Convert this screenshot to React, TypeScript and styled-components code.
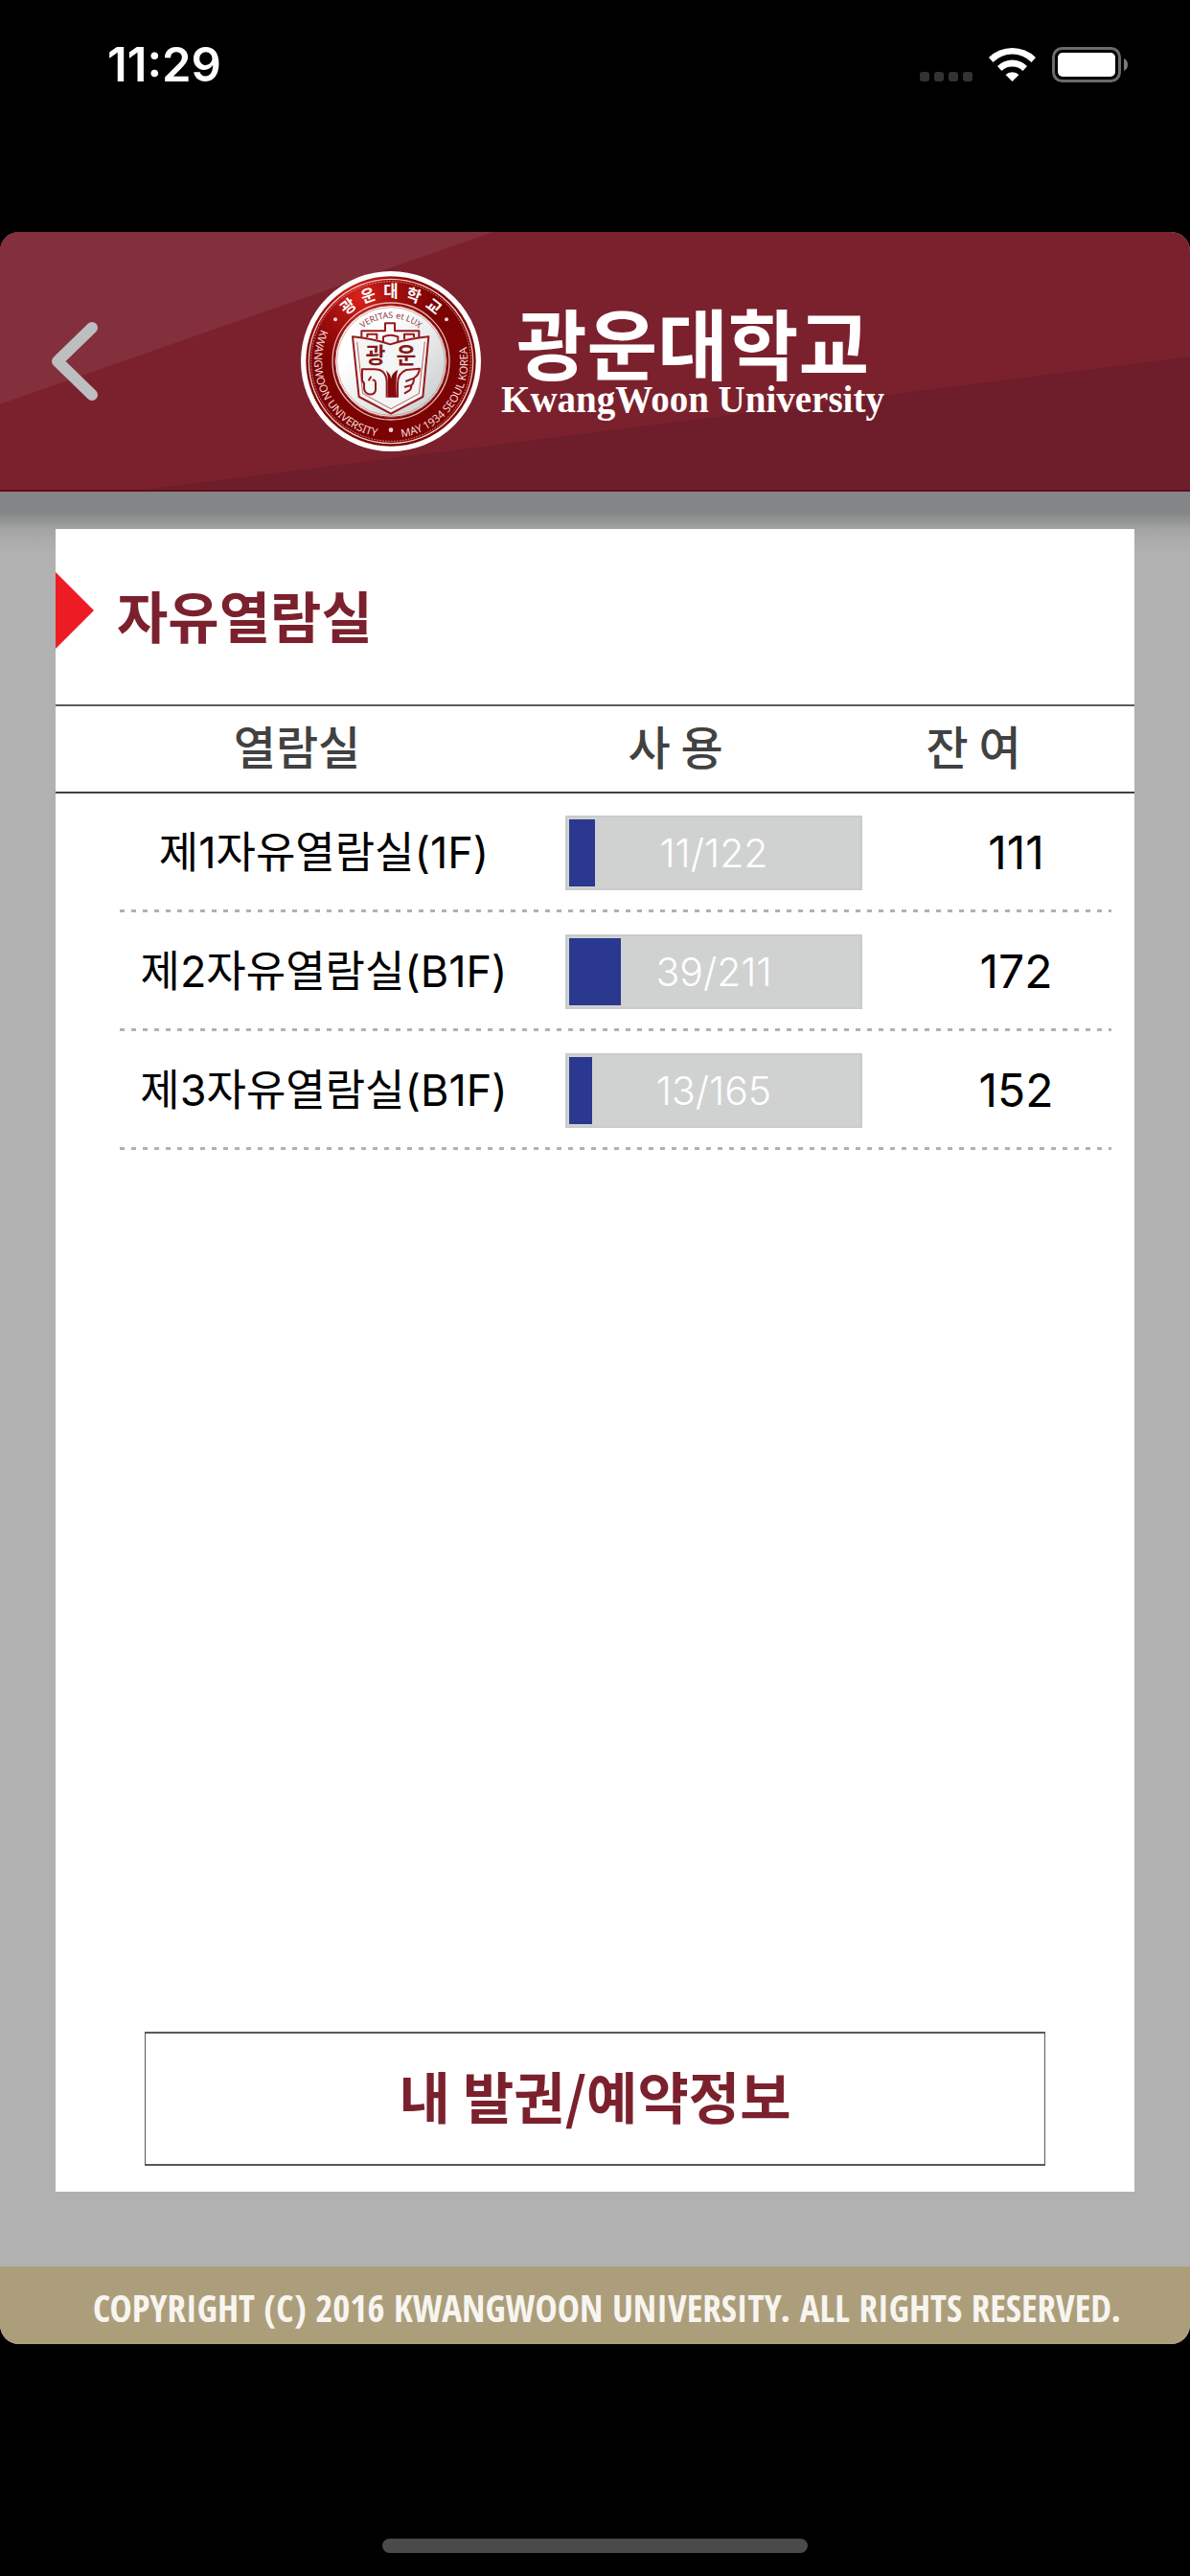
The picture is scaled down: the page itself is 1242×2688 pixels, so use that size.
import React from 'react';
import styled, { createGlobalStyle } from 'styled-components';

const sans = `Inter, "Noto Sans CJK KR", sans-serif`;
const korean = `"Noto Sans CJK KR", sans-serif`;
const maroon = '#7b212d';

const GlobalStyle = createGlobalStyle`
  *, *::before, *::after { box-sizing: border-box; }
  body { margin: 0; background: #000; font-family: ${sans}; }
`;

const Phone = styled.div`
  display: flex;
  flex-direction: column;
  min-height: 100vh;
  background: #000;
`;

const StatusBar = styled.div`
  display: flex;
  align-items: center;
  justify-content: space-between;
  height: 136px;
  margin-bottom: 106px;
  padding: 0 64px 0 112px;
  color: #fff;
`;

const Clock = styled.time`
  font-size: 49px;
  font-weight: 600;
  line-height: 56px;
`;

const Screen = styled.div`
  flex: 1;
  display: flex;
  flex-direction: column;
  overflow: hidden;
  border-radius: 20px;
  background: #b1b1b1;
`;

const Header = styled.header`
  position: relative;
  display: grid;
  grid-template-columns: 1fr auto 1fr;
  align-items: center;
  height: 271px;
  border-bottom: 2px solid #650d1b;
  background: ${maroon};
`;

const HeaderBackdrop = styled.svg`
  position: absolute;
  inset: 0;
  width: 100%;
  height: 100%;
`;

const BackButton = styled.button`
  position: relative;
  justify-self: start;
  display: flex;
  margin: 0;
  padding: 20px 40px;
  border: 0;
  background: none;
  cursor: pointer;
`;

const Brand = styled.div`
  position: relative;
  display: flex;
  align-items: center;
  gap: 20px;
  padding-right: 6px;
  color: #fff;
`;

const Wordmark = styled.div`
  display: flex;
  flex-direction: column;
  align-items: center;
`;

const BrandKorean = styled.span`
  font-family: ${korean};
  font-size: 80px;
  font-weight: 700;
  line-height: 80px;
`;

const BrandEnglish = styled.span`
  font-family: "Liberation Serif", serif;
  font-size: 39px;
  font-weight: 700;
  line-height: 44px;
`;

const Body = styled.main`
  flex: 1;
  display: flex;
  flex-direction: column;
  padding: 39px 58px 78px;
  background: linear-gradient(#848587 0, #848587 22px, #a4a6a5 40px, #b1b1b1 64px);
`;

const Card = styled.section`
  flex: 1;
  display: flex;
  flex-direction: column;
  background: #fff;
`;

const TitleRow = styled.div`
  display: flex;
  align-items: center;
  gap: 24px;
  height: 183px;
  padding-bottom: 13px;
`;

const Marker = styled.span`
  width: 40px;
  height: 80px;
  background: #ed1c24;
  clip-path: polygon(0 0, 100% 50%, 0 100%);
`;

const Title = styled.h1`
  margin: 0;
  padding-top: 8px;
  font-family: ${korean};
  font-size: 58px;
  font-weight: 700;
  line-height: 80px;
  color: ${maroon};
`;

const RoomTable = styled.table`
  display: block;
`;

const TableHead = styled.thead`
  display: block;
  border-top: 2px solid #58595b;
  border-bottom: 2px solid #414141;
`;

const HeadRow = styled.tr`
  display: grid;
  grid-template-columns: 504fr 286fr 336fr;
  height: 89px;
`;

const HeadCell = styled.th`
  padding: 4px 0 0;
  font-family: ${korean};
  font-size: 48px;
  font-weight: 500;
  line-height: 72px;
  color: #414141;
`;

const TableBody = styled.tbody`
  display: block;
  padding: 0 24px 0 67px;
`;

const RoomRow = styled.tr`
  display: grid;
  grid-template-columns: 424fr 392fr 219fr;
  align-items: center;
  height: 124px;
  padding-bottom: 3px;
  background: linear-gradient(90deg, #afb1b3 5px, transparent 5px) left bottom / 12px 3px repeat-x;
`;

const RoomName = styled.th`
  padding: 2px 0 0 2px;
  font-size: 45px;
  font-weight: 400;
  line-height: 60px;
  white-space: nowrap;
  text-align: center;
`;

const UsageCell = styled.td`
  padding: 2px 41px 0;
`;

const Remaining = styled.td`
  padding: 2px 0 0 20px;
  font-size: 48px;
  line-height: 60px;
  text-align: center;
`;

const Meter = styled.div`
  display: grid;
  height: 78px;
  padding: 2px;
  border: 2px solid #c9cbcc;
  background: #d0d2d1;

  > * { grid-area: 1 / 1; }
`;

const MeterFill = styled.div`
  background: #2b388f;
`;

const MeterText = styled.span`
  align-self: center;
  font-size: 41px;
  font-weight: 300;
  line-height: 48px;
  text-align: center;
  color: #fff;
`;

const TicketButton = styled.button`
  height: 140px;
  margin: auto 93px 27px;
  padding: 0 0 8px;
  border: 1px solid #58595b;
  border-width: 2px 1px;
  background: #fff;
  font-family: ${korean};
  font-size: 58px;
  font-weight: 700;
  line-height: 80px;
  color: ${maroon};
  cursor: pointer;
`;

const Footer = styled.footer`
  height: 81px;
  padding: 4px 60px 0 85px;
  background: #ad9e7b;
  font-family: "Open Sans Condensed", "Noto Sans Condensed", "Roboto Condensed", "Noto Sans", sans-serif;
  font-size: 39px;
  font-weight: 300;
  line-height: 77px;
  white-space: nowrap;
  text-align: center;
  color: #f7f5f0;
`;

const HomeArea = styled.div`
  display: flex;
  align-items: flex-end;
  justify-content: center;
  height: 242px;
  padding-bottom: 24px;
`;

const HomeIndicator = styled.div`
  width: 444px;
  height: 15px;
  border-radius: 8px;
  background: #4a4a4a;
`;

function StatusIcons() {
  return (
    <svg width="218" height="38" viewBox="0 0 218 38" aria-hidden="true">
      {[0, 15, 30, 45].map((x) => (
        <rect key={x} x={x} y="26" width="10" height="10" rx="3" fill="#333" />
      ))}
      <g fill="#fff">
        <path d="M72 11 A35 35 0 0 1 121 11 L116.500 16 A28 28 0 0 0 76.500 16 Z" />
        <path d="M81 20 A22 22 0 0 1 112 20 L107.500 25 A16 16 0 0 0 85.500 25 Z" />
        <path d="M89.500 29 A10 10 0 0 1 103.500 29 L96.500 36 Z" />
      </g>
      <rect x="139.500" y="1.500" width="69" height="34" rx="9" fill="none" stroke="#6b6b6b" strokeWidth="3" />
      <rect x="144" y="6" width="60" height="25" rx="5" fill="#fff" />
      <path d="M213 12 Q217 14 217 18.500 Q217 23 213 25 Z" fill="#7c7c7c" />
    </svg>
  );
}

function Seal() {
  const ring = ['광', '운', '대', '학', '교'];
  return (
    <svg width="190" height="190" viewBox="35 38 570 570" role="img" aria-label="광운대학교">
      <defs>
        <radialGradient id="band" gradientUnits="userSpaceOnUse" cx="225" cy="120" r="230">
          <stop offset="0" stopColor="#dc221c" />
          <stop offset="0.450" stopColor="#a30f0e" />
          <stop offset="1" stopColor="#7c0303" />
        </radialGradient>
        <linearGradient id="disc" x1="0" y1="0" x2="1" y2="1">
          <stop offset="0.300" stopColor="#ffffff" />
          <stop offset="1" stopColor="#c3c6c8" />
        </linearGradient>
        <path id="arc-left" d="M102 223 A240 240 0 0 0 300 562" />
        <path id="arc-right" d="M354 561 A240 240 0 0 0 546 240" />
        <path id="arc-motto" d="M185 323 A135 135 0 0 1 455 323" />
      </defs>
      <circle cx="320" cy="323" r="274" fill="url(#band)" stroke="#fff" strokeWidth="16" />
      <circle cx="320" cy="323" r="257" fill="none" stroke="#f0c9c6" strokeWidth="4" />
      <circle cx="320" cy="323" r="250" fill="none" stroke="#d99a96" strokeWidth="3" strokeDasharray="5 4" />
      <circle cx="320" cy="323" r="183" fill="none" stroke="#e8b8b4" strokeWidth="4" />
      <circle cx="320" cy="323" r="175" fill="url(#disc)" stroke="#a8302f" strokeWidth="3" />
      <circle cx="320" cy="323" r="169" fill="none" stroke="#c98582" strokeWidth="2" />

      <g fill="#fff" fontFamily="Noto Sans CJK KR, sans-serif" fontSize="50" fontWeight="700" textAnchor="middle">
        {ring.map((syllable, i) => (
          <text key={syllable} x="320" y="123" transform={`rotate(${(i - 2) * 19} 320 323)`}>
            {syllable}
          </text>
        ))}
      </g>
      <g fill="#f3d4d2">
        <circle cx="146" cy="192" r="6" />
        <circle cx="494" cy="192" r="6" />
        <circle cx="320" cy="538" r="7" />
      </g>
      <g fill="#f3dad8" fontFamily="Noto Sans, sans-serif" fontSize="34">
        <text><textPath href="#arc-left">KWANGWOON UNIVERSITY</textPath></text>
        <text><textPath href="#arc-right">MAY 1934 SEOUL KOREA</textPath></text>
      </g>
      <text fill="#8d3a3c" fontFamily="Noto Sans, sans-serif" fontSize="27" textAnchor="middle">
        <textPath href="#arc-motto" startOffset="50%">VERITAS et LUX</textPath>
      </text>

      <g fill="none" stroke="#96191b" strokeWidth="6" strokeLinejoin="round">
        <path d="M200 246 Q262 252 318 270 Q376 252 438 246 L420 434 L320 487 L220 434 Z" fill="#f4f5f5" />
        <path d="M228 248 V228 H302 V204 H332 V228 H408 V248" />
        <path d="M246 248 V238 H276 V254 M296 262 V246 Q318 236 342 246 V262 M362 254 V238 H392 V248" />
        <path d="M214 262 L232 424 L320 472 L408 424 L426 262" strokeWidth="2" />
        <path d="M307 436 V385 Q304 348 268 348 H230 V384 Q238 390 236 400 Q234 420 250 426 Q268 430 272 414 V392 Q272 380 262 382 M258 370 L250 384" />
        <path d="M341 436 V392 Q342 360 368 350 L410 346 Q408 366 392 376 L366 386 M392 376 Q392 392 384 398 L362 404 M384 398 Q384 410 378 414 L362 424" />
      </g>
      <path d="M304 352 Q320 362 320 378 Q324 358 342 350 Q334 372 338 436 H310 V390 Q312 364 304 352 Z" fill="#84090c" />
      <g fill="#84191b" fontFamily="Noto Sans CJK KR, sans-serif" fontSize="68" fontWeight="700" textAnchor="middle">
        <text x="272" y="330">광</text>
        <text x="368" y="330">운</text>
      </g>
    </svg>
  );
}

const rooms = [
  { name: '제1자유열람실(1F)', used: 11, total: 122, left: 111 },
  { name: '제2자유열람실(B1F)', used: 39, total: 211, left: 172 },
  { name: '제3자유열람실(B1F)', used: 13, total: 165, left: 152 },
];

export default function App() {
  return (
    <Phone>
      <GlobalStyle />
      <StatusBar>
        <Clock>11:29</Clock>
        <StatusIcons />
      </StatusBar>
      <Screen>
        <Header>
          <HeaderBackdrop viewBox="0 0 1242 271" preserveAspectRatio="none" aria-hidden="true">
            <polygon points="0,0 515,0 0,181" fill="#84303c" />
            <polygon points="150,271 1242,131 1242,271" fill="#6d1e2a" />
          </HeaderBackdrop>
          <BackButton type="button" aria-label="뒤로">
            <svg width="72" height="84" viewBox="0 0 72 84" fill="none" stroke="#bcbec0" strokeWidth="12" strokeLinecap="round" strokeLinejoin="round">
              <path d="M56 7 L20 42 L56 77" />
            </svg>
          </BackButton>
          <Brand>
            <Seal />
            <Wordmark>
              <BrandKorean>광운대학교</BrandKorean>
              <BrandEnglish lang="en">KwangWoon University</BrandEnglish>
            </Wordmark>
          </Brand>
        </Header>
        <Body>
          <Card>
            <TitleRow>
              <Marker />
              <Title>자유열람실</Title>
            </TitleRow>
            <RoomTable>
              <TableHead>
                <HeadRow>
                  <HeadCell scope="col">열람실</HeadCell>
                  <HeadCell scope="col">사 용</HeadCell>
                  <HeadCell scope="col">잔 여</HeadCell>
                </HeadRow>
              </TableHead>
              <TableBody>
                {rooms.map((room) => (
                  <RoomRow key={room.name}>
                    <RoomName scope="row">{room.name}</RoomName>
                    <UsageCell>
                      <Meter>
                        <MeterFill style={{ width: `${Math.round((room.used / room.total) * 100)}%` }} />
                        <MeterText>{`${room.used}/${room.total}`}</MeterText>
                      </Meter>
                    </UsageCell>
                    <Remaining>{room.left}</Remaining>
                  </RoomRow>
                ))}
              </TableBody>
            </RoomTable>
            <TicketButton type="button">내 발권/예약정보</TicketButton>
          </Card>
        </Body>
        <Footer>COPYRIGHT (C) 2016 KWANGWOON UNIVERSITY. ALL RIGHTS RESERVED.</Footer>
      </Screen>
      <HomeArea>
        <HomeIndicator />
      </HomeArea>
    </Phone>
  );
}
